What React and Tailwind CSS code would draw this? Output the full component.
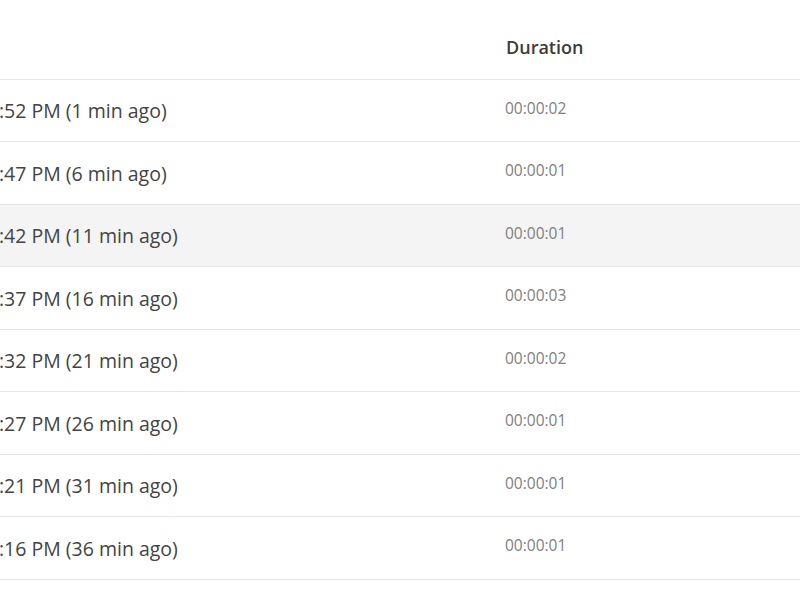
import React from 'react'

const runs = [
  { time: ':52 PM (1 min ago)', duration: '00:00:02' },
  { time: ':47 PM (6 min ago)', duration: '00:00:01' },
  { time: ':42 PM (11 min ago)', duration: '00:00:01', selected: true },
  { time: ':37 PM (16 min ago)', duration: '00:00:03' },
  { time: ':32 PM (21 min ago)', duration: '00:00:02' },
  { time: ':27 PM (26 min ago)', duration: '00:00:01' },
  { time: ':21 PM (31 min ago)', duration: '00:00:01' },
  { time: ':16 PM (36 min ago)', duration: '00:00:01' },
]

export default function App() {
  return (
    <div className="w-[800px] h-[600px] overflow-hidden bg-white font-['Open_Sans',sans-serif]">
      <div className="flex h-[80px] items-center border-b border-[#e6e6e6] pt-[16px]">
        <div className="w-[506px]" />
        <div className="text-[18px] font-semibold text-[#3c3c3c]">Duration</div>
      </div>
      {runs.map((run, i) => (
        <div
          key={i}
          className={`flex items-center border-b border-[#e6e6e6] ${i % 2 === 0 ? 'h-[62px]' : 'h-[63px]'} ${run.selected ? 'bg-[#f4f4f4]' : 'bg-white'}`}
        >
          <div className="w-[506px] -ml-[1px] pt-[1px] text-[19.5px] text-[#444444]">{run.time}</div>
          <div className="-mt-[4px] text-[15.5px] text-[#808080]">{run.duration}</div>
        </div>
      ))}
    </div>
  )
}
